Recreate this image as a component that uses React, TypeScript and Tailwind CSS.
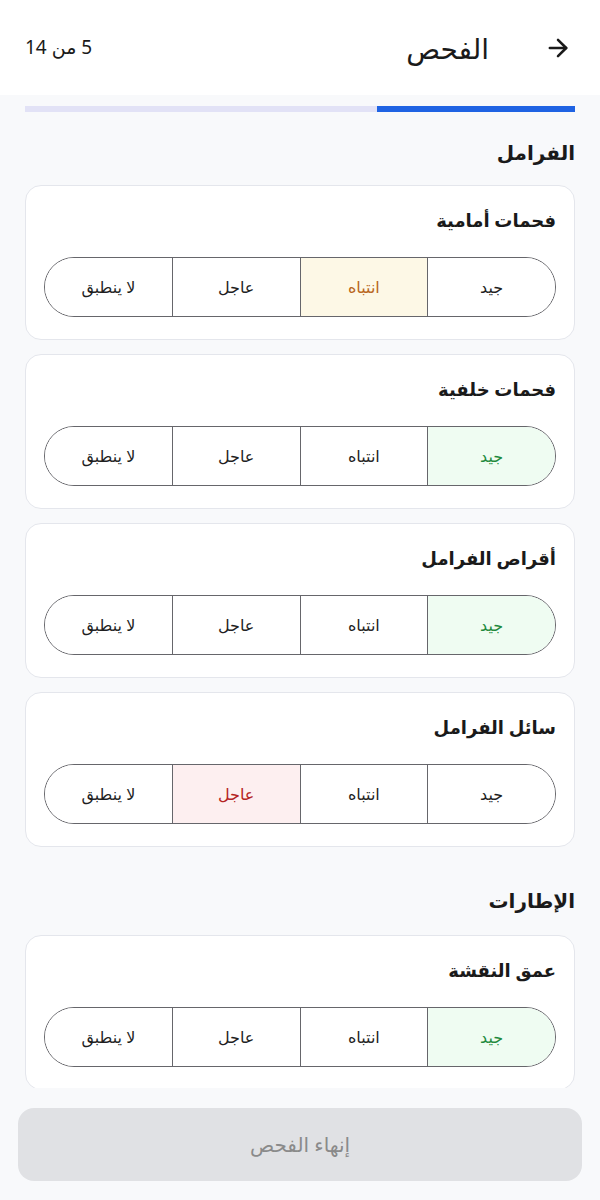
import React from "react";

type Status = "good" | "warn" | "urgent" | "na" | null;

const options: { key: Exclude<Status, null>; label: string }[] = [
  { key: "good", label: "جيد" },
  { key: "warn", label: "انتباه" },
  { key: "urgent", label: "عاجل" },
  { key: "na", label: "لا ينطبق" },
];

function Segment({ value }: { value: Status }) {
  return (
    <div className="flex h-[60px] w-full overflow-hidden rounded-full border border-[#66666b]">
      {options.map((o, i) => {
        const active = value === o.key;
        let cls = "bg-white text-[#1f1f1f]";
        if (active && o.key === "good") cls = "bg-[#effcf2] text-[#1f8a3e]";
        if (active && o.key === "warn") cls = "bg-[#fdf8e6] text-[#b8651b]";
        if (active && o.key === "urgent") cls = "bg-[#fdeff0] text-[#b42323]";
        return (
          <div
            key={o.key}
            className={`flex flex-1 items-center justify-center text-[16px] ${cls} ${
              i > 0 ? "border-r border-[#66666b]" : ""
            }`}
          >
            {o.label}
          </div>
        );
      })}
    </div>
  );
}

function Card({ title, value }: { title: string; value: Status }) {
  return (
    <div className="rounded-2xl border border-[#e4e6ec] bg-white px-[18px] pb-[22px] pt-[20px]">
      <div className="h-[28px] text-[18px] font-semibold leading-[28px] text-[#1a1a1a]">
        {title}
      </div>
      <div className="mt-[23px]">
        <Segment value={value} />
      </div>
    </div>
  );
}

export default function App() {
  return (
    <div
      dir="rtl"
      className="flex h-[1200px] w-full flex-col bg-[#f8f9fb]"
      style={{ fontFamily: '"Noto Sans", "DejaVu Sans", sans-serif' }}
    >
      <header className="flex h-[95px] shrink-0 items-center justify-between bg-white pl-[25px] pr-[28px]">
        <div className="flex items-center gap-[55px]">
          <svg
            width="28"
            height="28"
            viewBox="0 0 24 24"
            fill="none"
            stroke="#1a1a1a"
            strokeWidth="2.2"
            strokeLinecap="round"
            strokeLinejoin="round"
          >
            <path d="M5 12h14" />
            <path d="m12 5 7 7-7 7" />
          </svg>
          <h1 className="text-[28px] font-normal leading-none text-[#1a1a1a]">الفحص</h1>
        </div>
        <div className="text-[19px] text-[#1a1a1a]">5 من 14</div>
      </header>

      <main className="flex-1 overflow-hidden px-[25px]">
        <div className="mt-[11px] h-[6px] w-full bg-[#e2e2f6]">
          <div className="h-full w-[36%] bg-[#1f63e3]" />
        </div>

        <h2 className="mt-[27px] h-[28px] text-[20px] font-semibold leading-[28px] text-[#1a1a1a]">
          الفرامل
        </h2>
        <div className="mt-[18px] flex flex-col gap-[14px]">
          <Card title="فحمات أمامية" value="warn" />
          <Card title="فحمات خلفية" value="good" />
          <Card title="أقراص الفرامل" value="good" />
          <Card title="سائل الفرامل" value="urgent" />
        </div>

        <h2 className="mt-[40px] h-[28px] text-[20px] font-semibold leading-[28px] text-[#1a1a1a]">
          الإطارات
        </h2>
        <div className="mt-[20px] flex flex-col gap-[14px]">
          <Card title="عمق النقشة" value="good" />
        </div>
      </main>

      <footer className="shrink-0 px-[18px] pb-[19px] pt-[20px]">
        <button className="flex h-[73px] w-full items-center justify-center rounded-2xl bg-[#e0e1e4] text-[20px] text-[#8a8a8a]">
          إنهاء الفحص
        </button>
      </footer>
    </div>
  );
}
